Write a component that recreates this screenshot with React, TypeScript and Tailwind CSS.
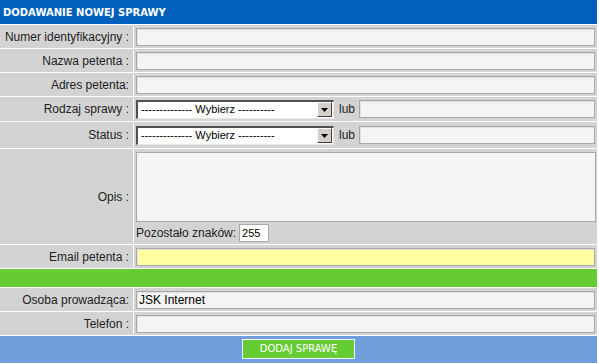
import React from 'react';

const font = { fontFamily: '"Liberation Sans", Arial, sans-serif' };

const Label: React.FC<{ text: string; className?: string }> = ({ text, className = '' }) => (
  <div className={`w-[134px] shrink-0 bg-[#d3d3d3] border-r border-white flex items-center justify-end pr-[4px] text-[12px] text-[#222] ${className}`}>
    {text}
  </div>
);

const TextBox: React.FC<{ className?: string; value?: string; bg?: string }> = ({ className = '', value = '', bg = 'bg-[#f4f4f4]' }) => (
  <div className={`h-[18px] ${bg} border border-[#a8a8a8] shadow-[inset_1px_1px_0_#e0e0e0] ${className}`}>
    {value && <span className="block pl-[2px] text-[12px] leading-[16px] text-black">{value}</span>}
  </div>
);

const FakeSelect: React.FC = () => (
  <div className="w-[198px] h-[19px] bg-white border-t-2 border-l-2 border-t-[#505050] border-l-[#505050] border-b border-r border-b-[#e8e8e8] border-r-[#e8e8e8] flex items-center">
    <span className="flex-1 pl-[3px] text-[11px] leading-none text-black">-------------- Wybierz ----------</span>
    <div className="w-[15px] h-[15px] mr-[1px] bg-[#d4d0c8] border-t border-l border-white border-b border-r border-b-[#404040] border-r-[#404040] flex items-center justify-center">
      <svg width="7" height="4" viewBox="0 0 7 4"><path d="M0 0h7L3.5 4z" fill="#000" /></svg>
    </div>
  </div>
);

const Row: React.FC<{ label: string; h: string; children: React.ReactNode }> = ({ label, h, children }) => (
  <div className={`flex ${h} border-b border-white`}>
    <Label text={label} />
    <div className="flex-1 bg-[#d3d3d3] flex items-center pl-[2px] pr-[2px]">{children}</div>
  </div>
);

export default function App() {
  return (
    <div className="w-[599px] h-[364px] bg-white" style={font}>
      <div className="w-[597px]">
        <div className="h-[25px] bg-[#0060bc] border-b border-white flex items-center pl-[3px]">
          <span className="text-white font-bold text-[10px]" style={{ fontFamily: '"DejaVu Sans", Verdana, sans-serif' }}>
            DODAWANIE NOWEJ SPRAWY
          </span>
        </div>
        <Row label="Numer identyfikacyjny :" h="h-[24px]"><TextBox className="flex-1" /></Row>
        <Row label="Nazwa petenta :" h="h-[24px]"><TextBox className="flex-1" /></Row>
        <Row label="Adres petenta:" h="h-[24px]"><TextBox className="flex-1" /></Row>
        <Row label="Rodzaj sprawy :" h="h-[25px]">
          <FakeSelect />
          <span className="ml-[5px] mr-[4px] text-[12px] text-[#222]">lub</span>
          <TextBox className="flex-1" />
        </Row>
        <Row label="Status :" h="h-[27px]">
          <FakeSelect />
          <span className="ml-[5px] mr-[4px] text-[12px] text-[#222]">lub</span>
          <TextBox className="flex-1" />
        </Row>
        <div className="flex h-[96px] border-b border-white">
          <Label text="Opis :" />
          <div className="flex-1 bg-[#d3d3d3] pl-[2px] pr-[1px] pt-[3px]">
            <div className="h-[70px] bg-[#f4f4f4] border border-[#a8a8a8]" />
            <div className="flex items-center mt-[2px]">
              <span className="text-[12px] text-[#222] mr-[3px]">Pozostało znaków:</span>
              <div className="w-[30px] h-[18px] bg-white border border-[#a8a8a8] text-[11px] leading-[16px] pl-[2px] text-black">255</div>
            </div>
          </div>
        </div>
        <Row label="Email petenta :" h="h-[24px]"><TextBox className="flex-1" bg="bg-[#ffffa0]" /></Row>
        <div className="h-[19px] bg-[#66cc33] border-b border-white" />
        <Row label="Osoba prowadząca:" h="h-[24px]"><TextBox className="flex-1" value="JSK Internet" /></Row>
        <Row label="Telefon :" h="h-[24px]"><TextBox className="flex-1" /></Row>
        <div className="h-[27px] bg-[#6e9fdc] flex justify-center pt-[3px]">
          <button className="w-[113px] h-[20px] bg-[#66cc33] border border-white text-white text-[10px] leading-none" style={{ fontFamily: '"DejaVu Sans", Verdana, sans-serif' }}>
            DODAJ SPRAWĘ
          </button>
        </div>
      </div>
    </div>
  );
}
